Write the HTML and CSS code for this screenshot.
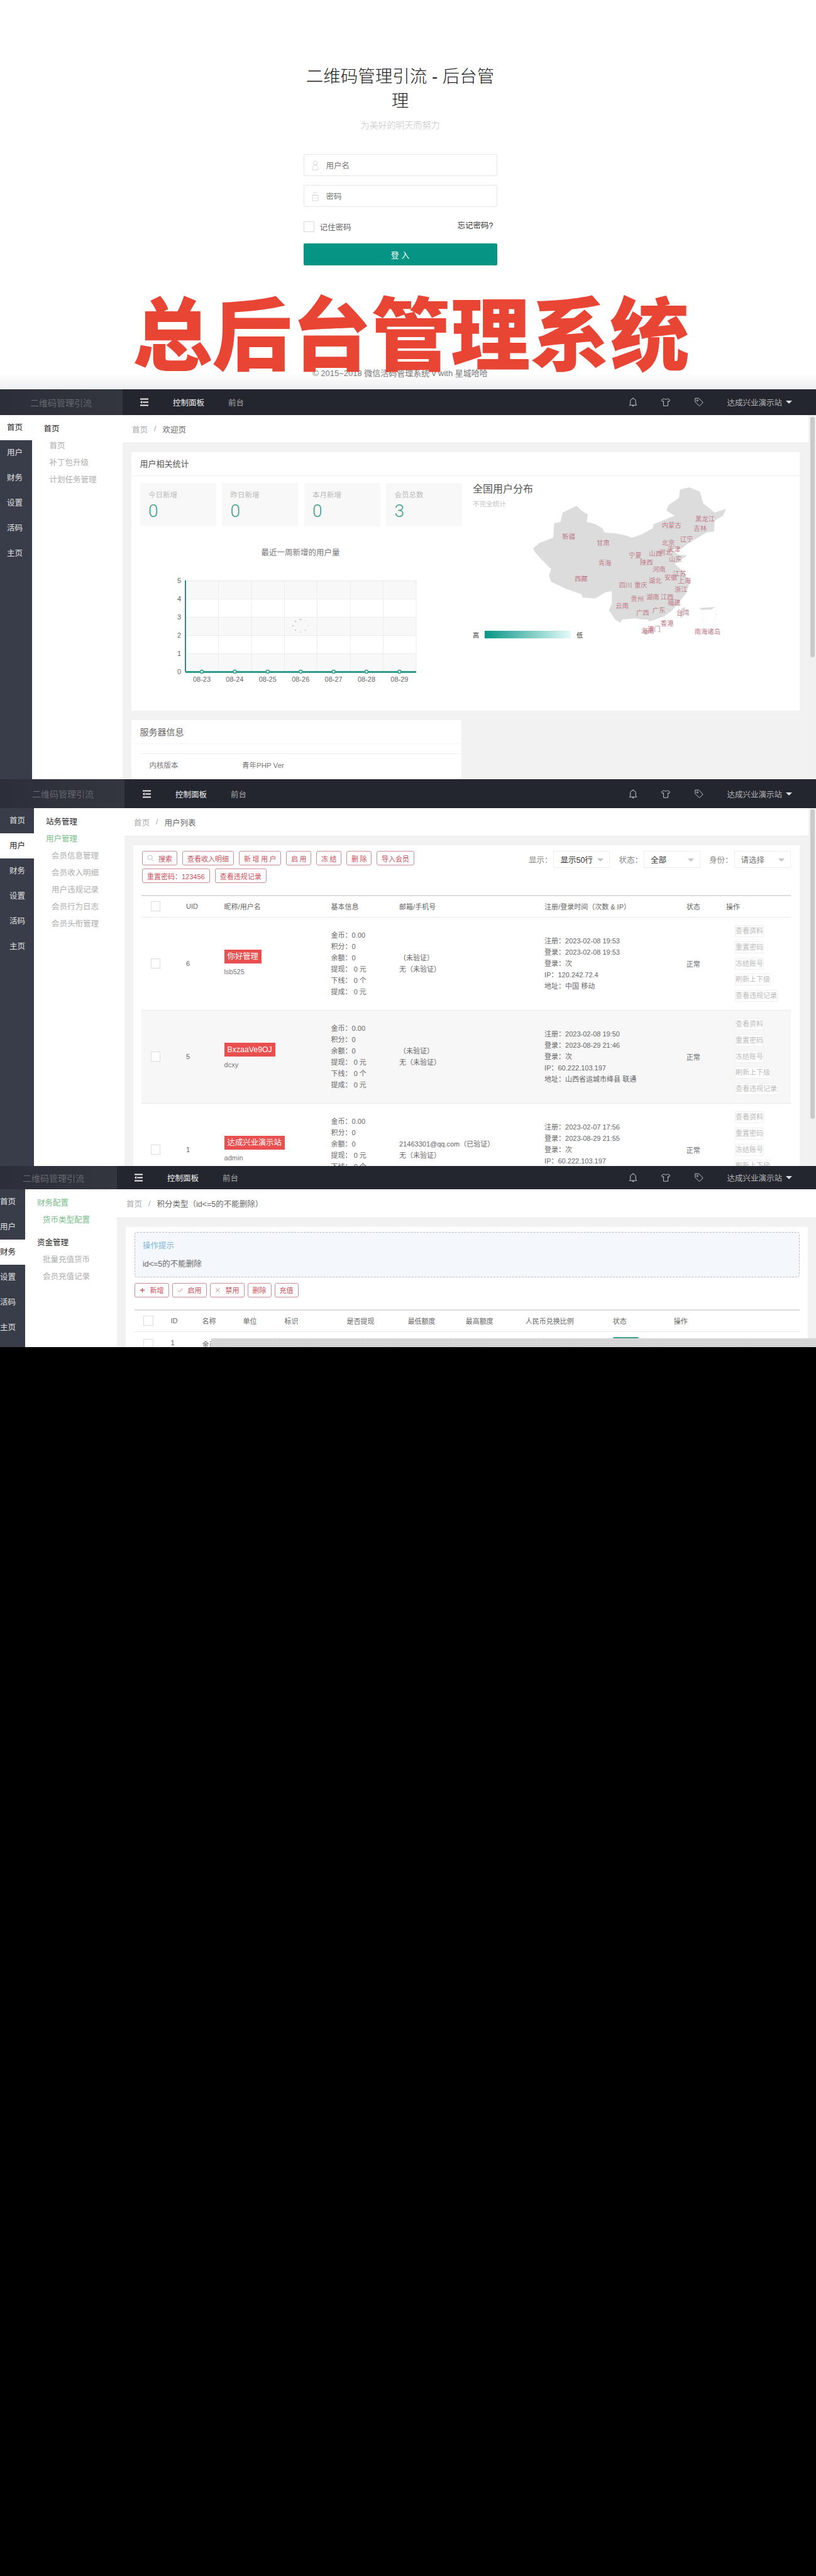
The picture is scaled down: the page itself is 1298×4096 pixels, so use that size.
FILE: index.html
```html
<!DOCTYPE html>
<html lang="zh">
<head>
<meta charset="utf-8">
<title>总后台管理系统</title>
<link rel="stylesheet" href="styles.css">
</head>
<body>
<svg class="defs" width="0" height="0" aria-hidden="true">
  <symbol id="i-menu" viewBox="0 0 15 13"><path d="M1 1.500h13M5 6.500h9M1 11.500h13" fill="none" stroke="currentColor" stroke-width="2"/><path d="M4 4v5L1 6.500z" fill="currentColor"/></symbol>
  <symbol id="i-bell" viewBox="0 0 16 18"><path d="M2 14h12l-1.500-2V7.500A4.500 4.500 0 0 0 8 3a4.500 4.500 0 0 0-4.500 4.500V12zM8 3V1.500M6.300 14.500a1.800 1.800 0 0 0 3.400 0" fill="none" stroke="currentColor" stroke-width="1"/></symbol>
  <symbol id="i-shirt" viewBox="0 0 18 18"><path d="M6 2.500 1.500 5l1.500 3 2-1v8.500h8V7l2 1 1.500-3L12 2.500c-.5 2-5.500 2-6 0z" fill="none" stroke="currentColor" stroke-width="1"/></symbol>
  <symbol id="i-tag" viewBox="0 0 18 18"><path d="M2 2h6.500L16 9.500 9.500 16 2 8.500z" fill="none" stroke="currentColor" stroke-width="1"/><circle cx="6" cy="6" r="1.300" fill="none" stroke="currentColor"/></symbol>
  <symbol id="i-user" viewBox="0 0 14 20"><circle cx="7" cy="5" r="4" fill="none" stroke="currentColor"/><path d="M1.500 19v-5c0-3 2-4.500 5.500-4.500s5.500 1.500 5.500 4.500v5z" fill="none" stroke="currentColor"/></symbol>
  <symbol id="i-lock" viewBox="0 0 14 20"><rect x="1.500" y="8" width="11" height="11" fill="none" stroke="currentColor"/><path d="M3.500 8V5a3.500 3.500 0 0 1 7 0M7 12v3" fill="none" stroke="currentColor"/></symbol>
  <symbol id="i-search" viewBox="0 0 12 12"><circle cx="5" cy="5" r="4" fill="none" stroke="currentColor"/><path d="m8 8 3.500 3.500" stroke="currentColor"/></symbol>
</svg>

<section class="login-panel">
  <div class="login">
    <h1 class="login-title">二维码管理引流 - 后台管理</h1>
    <p class="login-sub">为美好的明天而努力</p>
    <div class="field"><svg class="field-icon"><use href="#i-user"/></svg>用户名</div>
    <div class="field field-next"><svg class="field-icon"><use href="#i-lock"/></svg>密码</div>
    <div class="remember">
      <span class="remember-box"></span><span class="remember-text">记住密码</span>
      <span class="forgot">忘记密码?</span>
    </div>
    <div class="login-btn">登 入</div>
    <p class="login-foot">© 2015~2018 微信活码管理系统 v with 星城哈哈</p>
  </div>
  <div class="banner">总后台管理系统</div>
</section>

<section class="admin p2">
  <header class="topbar">
    <div class="logo">二维码管理引流</div>
    <svg class="menu-icon"><use href="#i-menu"/></svg>
    <span class="topnav topnav-on">控制面板</span><span class="topnav">前台</span>
    <div class="topright">
      <svg class="top-icon"><use href="#i-bell"/></svg><svg class="top-icon"><use href="#i-shirt"/></svg><svg class="top-icon"><use href="#i-tag"/></svg>
      <span class="top-user">达成兴业演示站</span><span class="caret"></span>
    </div>
  </header>
  <div class="body">
    <nav class="rail"><a class="rail-item rail-on">首页</a><a class="rail-item">用户</a><a class="rail-item">财务</a><a class="rail-item">设置</a><a class="rail-item">活码</a><a class="rail-item">主页</a></nav>
    <nav class="subnav">
      <div class="sub-group">首页</div>
      <div class="sub-item">首页</div><div class="sub-item">补丁包升级</div><div class="sub-item">计划任务管理</div>
    </nav>
    <main class="main">
      <div class="crumb"><span class="crumb-home">首页</span><span class="crumb-sep">/</span><span>欢迎页</span></div>
      <div class="content">
        <div class="card card-stats">
          <div class="card-head">用户相关统计</div>
          <div class="dash">
            <div class="dash-left">
              <div class="stats">
                <div class="stat"><div class="stat-label">今日新增</div><div class="stat-value">0</div></div>
                <div class="stat"><div class="stat-label">昨日新增</div><div class="stat-value">0</div></div>
                <div class="stat"><div class="stat-label">本月新增</div><div class="stat-value">0</div></div>
                <div class="stat"><div class="stat-label">会员总数</div><div class="stat-value">3</div></div>
              </div>
              <svg class="chart" viewBox="0 0 460 250" width="460" height="250">
                <text class="chart-title" x="255" y="33" text-anchor="middle">最近一周新增的用户量</text>
                <rect x="72" y="73" width="367" height="29" fill="#f8f8f8"/>
                <rect x="72" y="131" width="367" height="29" fill="#f8f8f8"/>
                <rect x="72" y="189" width="367" height="29" fill="#f8f8f8"/>
                <path class="grid" d="M72 73.500h367M72 102.500h367M72 131.500h367M72 160.500h367M72 189.500h367M124.500 73v145M177 73v145M229.500 73v145M281.500 73v145M334 73v145M386.500 73v145M439 73v145"/>
                <g class="dots"><circle cx="255" cy="135" r="1.500"/><circle cx="247" cy="138" r="1.500"/><circle cx="243" cy="145" r="1.300"/><circle cx="247" cy="152" r="1.200"/><circle cx="255" cy="155" r="1"/><circle cx="263" cy="152" r="1"/><circle cx="267" cy="145" r=".8"/><circle cx="263" cy="138" r=".6"/></g>
                <path d="M72 73v145" stroke="#2f8d7d" stroke-width="2" fill="none"/>
                <path d="M72 218.500h367" stroke="#2f9c8b" stroke-width="3" fill="none"/>
                <g class="points"><circle cx="98" cy="218" r="2.500"/><circle cx="150.400" cy="218" r="2.500"/><circle cx="202.800" cy="218" r="2.500"/><circle cx="255.200" cy="218" r="2.500"/><circle cx="307.600" cy="218" r="2.500"/><circle cx="360" cy="218" r="2.500"/><circle cx="412.400" cy="218" r="2.500"/></g>
                <g class="axis-text" text-anchor="middle">
                  <text x="62" y="77">5</text><text x="62" y="106">4</text><text x="62" y="135">3</text><text x="62" y="164">2</text><text x="62" y="193">1</text><text x="62" y="222">0</text>
                  <text x="98" y="234">08-23</text><text x="150.400" y="234">08-24</text><text x="202.800" y="234">08-25</text><text x="255.200" y="234">08-26</text><text x="307.600" y="234">08-27</text><text x="360" y="234">08-28</text><text x="412.400" y="234">08-29</text>
                </g>
              </svg>
            </div>
            <div class="dash-map">
              <svg class="china" viewBox="0 0 1260 900" width="420" height="300">
                <path class="land" d="M55 395 85 370 150 345 155 275 185 270 195 225 238 205 262 193 285 215 315 235 310 270 350 280 385 300 395 320 450 325 500 335 525 345 570 330 625 300 630 280 680 260 730 240 690 215 700 190 750 155 755 115 800 105 850 125 865 180 920 225 975 208 960 240 920 265 918 315 880 320 840 345 790 375 760 400 730 395 720 405 745 425 790 430 760 450 730 470 775 510 800 560 785 610 760 640 720 690 680 720 610 745 600 735 570 735 540 730 480 735 470 750 445 735 415 690 430 660 430 600 400 605 350 635 290 630 285 615 215 590 140 555 130 525 140 495 90 445 60 410Z"/>
                <path class="land" d="M765 680 780 675 775 710 760 730 750 710Z"/>
                <path class="land" d="M845 680 925 675 905 688 860 690Z"/>
                <ellipse class="land" cx="592" cy="795" rx="15" ry="13"/>
                <path class="islands" d="M930 685 915 760M860 700 875 770"/>
                <g class="map-labels">
                  <text x="193" y="350">新疆</text><text x="357" y="382">甘肃</text><text x="668" y="298">内蒙古</text><text x="828" y="268">黑龙江</text><text x="820" y="313">吉林</text><text x="755" y="363">辽宁</text><text x="668" y="380">北京</text><text x="695" y="412">天津</text><text x="655" y="427">河北</text><text x="607" y="432">山西</text><text x="510" y="440">宁夏</text><text x="564" y="473">陕西</text><text x="702" y="458">山东</text><text x="365" y="477">青海</text><text x="624" y="508">河南</text><text x="722" y="529">江苏</text><text x="680" y="545">安徽</text><text x="745" y="560">上海</text><text x="605" y="561">湖北</text><text x="464" y="582">四川</text><text x="537" y="582">重庆</text><text x="252" y="552">西藏</text><text x="729" y="604">浙江</text><text x="520" y="647">贵州</text><text x="594" y="640">湖南</text><text x="662" y="640">江西</text><text x="696" y="667">福建</text><text x="448" y="682">云南</text><text x="546" y="714">广西</text><text x="623" y="702">广东</text><text x="738" y="714">台湾</text><text x="662" y="766">香港</text><text x="600" y="792">澳门</text><text x="570" y="802">海南</text><text x="824" y="805">南海诸岛</text>
                </g>
              </svg>
              <div class="map-title">全国用户分布</div>
              <div class="map-sub">不完全统计</div>
              <div class="legend"><span>高</span><span class="legend-bar"></span><span>低</span></div>
            </div>
          </div>
        </div>
        <div class="card card-server">
          <div class="card-head">服务器信息</div>
          <div class="server-row"><span class="server-key">内核版本</span><span class="server-val">青年PHP Ver</span></div>
        </div>
      </div>
    </main>
    <div class="scroll"><div class="thumb"></div></div>
  </div>
</section>

<section class="admin p3">
  <header class="topbar">
    <div class="logo">二维码管理引流</div>
    <svg class="menu-icon"><use href="#i-menu"/></svg>
    <span class="topnav topnav-on topnav-mark">控制面板</span><span class="topnav">前台</span>
    <div class="topright">
      <svg class="top-icon"><use href="#i-bell"/></svg><svg class="top-icon"><use href="#i-shirt"/></svg><svg class="top-icon"><use href="#i-tag"/></svg>
      <span class="top-user">达成兴业演示站</span><span class="caret"></span>
    </div>
  </header>
  <div class="body">
    <nav class="rail"><a class="rail-item">首页</a><a class="rail-item rail-on">用户</a><a class="rail-item">财务</a><a class="rail-item">设置</a><a class="rail-item">活码</a><a class="rail-item">主页</a></nav>
    <nav class="subnav">
      <div class="sub-group">站务管理</div>
      <div class="sub-group sub-green">用户管理</div>
      <div class="sub-item">会员信息管理</div><div class="sub-item">会员收入明细</div><div class="sub-item">用户违规记录</div><div class="sub-item">会员行为日志</div><div class="sub-item">会员头衔管理</div>
    </nav>
    <main class="main">
      <div class="crumb"><span class="crumb-home">首页</span><span class="crumb-sep">/</span><span>用户列表</span></div>
      <div class="content">
        <div class="card card-list">
          <div class="toolbar">
            <div class="btns">
              <span class="btn"><svg class="btn-icon"><use href="#i-search"/></svg>搜索</span><span class="btn">查看收入明细</span><span class="btn btn-spaced">新增用户</span><span class="btn btn-spaced">启用</span><span class="btn btn-spaced">冻结</span><span class="btn btn-spaced">删除</span><span class="btn">导入会员</span><span class="btn">重置密码：123456</span><span class="btn">查看违规记录</span>
            </div>
            <div class="filters">
              <span class="filter-label">显示：</span><span class="select">显示50行<i class="select-caret"></i></span>
              <span class="filter-label">状态：</span><span class="select">全部<i class="select-caret"></i></span>
              <span class="filter-label">身份：</span><span class="select select-muted">请选择<i class="select-caret"></i></span>
            </div>
          </div>
          <table class="table users">
            <colgroup><col class="u1"><col class="u2"><col class="u3"><col class="u4"><col class="u5"><col class="u6"><col class="u7"><col class="u8"></colgroup>
            <thead><tr><th><span class="check"></span></th><th>UID</th><th>昵称/用户名</th><th>基本信息</th><th>邮箱/手机号</th><th>注册/登录时间（次数 &amp; IP）</th><th>状态</th><th>操作</th></tr></thead>
            <tbody>
              <tr>
                <td><span class="check"></span></td><td>6</td>
                <td><span class="tag">你好管理</span><div class="uname">lsb525</div></td>
                <td><div class="line">金币：0.00</div><div class="line">积分：0</div><div class="line">余额：0</div><div class="line">提现： 0 元</div><div class="line">下线： 0 个</div><div class="line">提成： 0 元</div></td>
                <td><div class="line">（未验证）</div><div class="line">无（未验证）</div></td>
                <td><div class="line">注册：2023-02-08 19:53</div><div class="line">登录：2023-02-08 19:53</div><div class="line">登录：次</div><div class="line">IP：120.242.72.4</div><div class="line">地址：中国 移动</div></td>
                <td>正常</td>
                <td class="ops"><span class="op">查看资料</span><span class="op">重置密码</span><span class="op">冻结账号</span><span class="op">刷新上下级</span><span class="op">查看违规记录</span></td>
              </tr>
              <tr class="row-alt">
                <td><span class="check"></span></td><td>5</td>
                <td><span class="tag">BxzaaVe9OJ</span><div class="uname">dcxy</div></td>
                <td><div class="line">金币：0.00</div><div class="line">积分：0</div><div class="line">余额：0</div><div class="line">提现： 0 元</div><div class="line">下线： 0 个</div><div class="line">提成： 0 元</div></td>
                <td><div class="line">（未验证）</div><div class="line">无（未验证）</div></td>
                <td><div class="line">注册：2023-02-08 19:50</div><div class="line">登录：2023-08-29 21:46</div><div class="line">登录：次</div><div class="line">IP：60.222.103.197</div><div class="line">地址：山西省运城市绛县 联通</div></td>
                <td>正常</td>
                <td class="ops"><span class="op">查看资料</span><span class="op">重置密码</span><span class="op">冻结账号</span><span class="op">刷新上下级</span><span class="op">查看违规记录</span></td>
              </tr>
              <tr>
                <td><span class="check"></span></td><td>1</td>
                <td><span class="tag">达成兴业演示站</span><div class="uname">admin</div></td>
                <td><div class="line">金币：0.00</div><div class="line">积分：0</div><div class="line">余额：0</div><div class="line">提现： 0 元</div><div class="line">下线： 0 个</div><div class="line">提成： 0 元</div></td>
                <td><div class="line">21463301@qq.com（已验证）</div><div class="line">无（未验证）</div></td>
                <td><div class="line">注册：2023-02-07 17:56</div><div class="line">登录：2023-08-29 21:55</div><div class="line">登录：次</div><div class="line">IP：60.222.103.197</div><div class="line">地址：山西省运城市绛县 联通</div></td>
                <td>正常</td>
                <td class="ops"><span class="op">查看资料</span><span class="op">重置密码</span><span class="op">冻结账号</span><span class="op">刷新上下级</span><span class="op">查看违规记录</span></td>
              </tr>
            </tbody>
          </table>
        </div>
      </div>
    </main>
    <div class="scroll"><div class="thumb"></div></div>
  </div>
</section>

<section class="admin p4">
  <header class="topbar">
    <div class="logo">二维码管理引流</div>
    <svg class="menu-icon"><use href="#i-menu"/></svg>
    <span class="topnav topnav-on">控制面板</span><span class="topnav">前台</span>
    <div class="topright">
      <svg class="top-icon"><use href="#i-bell"/></svg><svg class="top-icon"><use href="#i-shirt"/></svg><svg class="top-icon"><use href="#i-tag"/></svg>
      <span class="top-user">达成兴业演示站</span><span class="caret"></span>
    </div>
  </header>
  <div class="body">
    <nav class="rail"><a class="rail-item">首页</a><a class="rail-item">用户</a><a class="rail-item rail-on">财务</a><a class="rail-item">设置</a><a class="rail-item">活码</a><a class="rail-item">主页</a></nav>
    <nav class="subnav">
      <div class="sub-group sub-green">财务配置</div>
      <div class="sub-item sub-item-green">货币类型配置</div>
      <div class="sub-group sub-gap">资金管理</div>
      <div class="sub-item">批量充值货币</div><div class="sub-item">会员充值记录</div>
    </nav>
    <main class="main">
      <div class="crumb"><span class="crumb-home">首页</span><span class="crumb-sep">/</span><span>积分类型（id&lt;=5的不能删除）</span></div>
      <div class="content">
        <div class="card card-coin">
          <div class="tips"><div class="tips-title">操作提示</div><div class="tips-text">id&lt;=5的不能删除</div></div>
          <div class="btns btns-coin">
            <span class="btn"><svg class="btn-icon" viewBox="0 0 10 10"><path d="M5 1v8M1 5h8" stroke="currentColor" stroke-width="1.500"/></svg>新增</span>
            <span class="btn"><svg class="btn-icon" viewBox="0 0 10 10"><path d="m1 5 3 3 5-6" fill="none" stroke="currentColor" stroke-width=".8"/></svg>启用</span>
            <span class="btn"><svg class="btn-icon" viewBox="0 0 10 10"><path d="m1.500 1.500 7 7M8.500 1.500l-7 7" fill="none" stroke="currentColor" stroke-width=".8"/></svg>禁用</span>
            <span class="btn">删除</span><span class="btn">充值</span>
          </div>
          <table class="table coins">
            <colgroup><col class="c1"><col class="c2"><col class="c3"><col class="c4"><col class="c5"><col class="c6"><col class="c7"><col class="c8"><col class="c9"><col class="c10"><col class="c11"></colgroup>
            <thead><tr><th><span class="check"></span></th><th>ID</th><th>名称</th><th>单位</th><th>标识</th><th>是否提现</th><th>最低额度</th><th>最高额度</th><th>人民币兑换比例</th><th>状态</th><th>操作</th></tr></thead>
            <tbody><tr><td><span class="check"></span></td><td>1</td><td>金币</td><td></td><td></td><td></td><td></td><td></td><td></td><td><span class="switch"></span></td><td></td></tr></tbody>
          </table>
        </div>
      </div>
    </main>
  </div>
  <div class="dither"></div>
</section>
</body>
</html>
```

FILE: styles.css
```css
* { box-sizing: border-box; }
html, body { margin: 0; padding: 0; }
body {
  background: #000;
  font-family: "Liberation Sans", "Noto Sans CJK SC", sans-serif;
  color: #666;
  font-size: 11px;
  height: 4096px;
  overflow: hidden;
}
.defs { position: absolute; }
p, h1 { margin: 0; font-weight: 400; }

/* login */
.login-panel {
  position: relative;
  height: 619px;
  overflow: hidden;
  background: linear-gradient(#fff 592px, #eeeff1 619px);
}
.login { width: 308px; margin-left: 482.500px; padding-top: 102px; text-align: center; }
.login-title { font-size: 27.500px; line-height: 39px; font-weight: 300; color: #222; }
.login-sub { margin-top: 9px; font-size: 14px; line-height: 20px; color: #c4c4c4; font-weight: 300; }
.field {
  display: flex; align-items: center;
  height: 35px; margin-top: 36px; padding-left: 12px;
  border: 1px solid #e6e6e6; border-radius: 2px; background: #fff;
  font-size: 12.500px; color: #777; text-align: left;
}
.field-next { margin-top: 14px; }
.field-icon { width: 11px; height: 16px; margin-right: 12px; color: #ccc; }
.remember { display: flex; align-items: center; height: 16px; margin-top: 23px; font-size: 12.500px; color: #666; }
.remember-box { width: 17px; height: 17px; border: 1px solid #d8d8d8; background: #fff; }
.remember-text { margin-left: 9px; }
.forgot { margin-left: auto; margin-right: 6px; margin-top: -6px; color: #333; }
.login-btn {
  display: flex; align-items: center; justify-content: center;
  height: 35px; margin-top: 19px; border-radius: 2px;
  background: #069584; color: #fff; font-size: 13px;
}
.login-foot { margin-top: 162px; font-size: 13px; line-height: 20px; color: #777; white-space: nowrap; }
.banner {
  position: absolute; left: 211px; top: 463px;
  font-family: "Noto Sans CJK SC", sans-serif;
  font-size: 126.500px; line-height: 122px; font-weight: 900;
  color: #e84535; white-space: nowrap;
}

/* admin shell */
.admin { position: relative; display: flex; flex-direction: column; overflow: hidden; background: #fff; }
.p2 { height: 620px; --bar: 41px; --rail: 50.600px; --side: 195px; --rail-pad: 11px; --logo-pad: 48px; --menu: 27px; }
.p3 { height: 615px; --bar: 46px; --rail: 54px; --side: 198px; --rail-pad: 15px; --logo-pad: 51px; --menu: 28px; }
.p4 { height: 288px; --bar: 37px; --rail: 40px; --side: 186px; --rail-pad: 0px; --logo-pad: 36px; --menu: 27px; }

.topbar { flex: none; display: flex; align-items: center; height: var(--bar); background: #23262f; color: #ccc; }
.logo {
  align-self: stretch; display: flex; align-items: center;
  width: var(--side); padding-left: var(--logo-pad);
  background: linear-gradient(90deg, #2c2f39, #33363f);
  color: #7b7d84; font-size: 14px; font-weight: 300;
}
.menu-icon { width: 15px; height: 13px; margin-left: var(--menu); color: #eee; }
.topnav { position: relative; margin-left: 38px; font-size: 12.500px; color: #aaa; }
.topnav-on { color: #f2f2f2; }
.topnav-mark::before { content: ""; position: absolute; left: 0; right: 0; top: -16px; height: 2px; background: #777; }
.topright { display: flex; align-items: center; margin-left: auto; padding-right: 38px; }
.top-icon { width: 16px; height: 17px; margin-right: 36.500px; color: #d5d5d5; }
.top-user { font-size: 12.500px; color: #b5b5b5; margin-right: 6px; }
.caret { width: 0; height: 0; border-left: 5px solid transparent; border-right: 5px solid transparent; border-top: 5px solid #ddd; }

.body { flex: 1; min-height: 0; display: flex; }
.rail { flex: none; width: var(--rail); background: #393d49; }
.rail-item { display: block; height: 40px; padding-left: var(--rail-pad); line-height: 40px; font-size: 12.500px; color: #e2e2e2; white-space: nowrap; overflow: hidden; }
.rail-on { background: #fff; color: #222; }
.subnav { flex: none; width: calc(var(--side) - var(--rail)); padding: 9px 0 0 19px; background: #fff; font-size: 12.500px; line-height: 27px; }
.sub-group { color: #222; }
.sub-green { color: #76bd89; }
.sub-gap { margin-top: 9px; }
.sub-item { padding-left: 9px; color: #aeaeae; white-space: nowrap; }
.sub-item-green { color: #76bd89; }
.main { flex: 1; min-width: 0; display: flex; flex-direction: column; background: #f2f2f2; }
.crumb { flex: none; display: flex; align-items: center; height: 45px; padding-left: 15px; background: #fff; border-bottom: 1px solid #e9e9e9; font-size: 12.500px; color: #666; }
.crumb-home { color: #aaa; }
.crumb-sep { margin: 0 10px; color: #aaa; }
.content { flex: 1; min-height: 0; padding: 14px 14px 0; }
.p4 .crumb { height: 46px; }
.p4 .content { padding-right: 13px; }
.scroll { flex: none; width: 12px; padding: 3px 2px 0 3px; background: #f1f1f1; }
.thumb { height: 382px; border-radius: 3px; background: #c9c9c9; }
.p3 .scroll { padding-top: 2px; }
.p3 .thumb { height: 492px; }

.card { background: #fff; }
.card-head { height: 38px; padding-left: 13.500px; line-height: 38px; border-bottom: 1px solid #f0f0f0; font-size: 13px; color: #555; }

/* dashboard */
.card-stats { height: 411px; margin-bottom: 15px; }
.dash { display: flex; padding-left: 14px; }
.dash-left { flex: none; width: 512.500px; padding-top: 11px; }
.stats { display: grid; grid-template-columns: repeat(4, 1fr); gap: 9.500px; }
.stat { height: 68.500px; padding: 11px 13px; background: #f8f8f8; }
.stat-label { font-size: 11.500px; line-height: 16px; color: #bbb; }
.stat-value { margin-top: 2px; font-family: Roboto, sans-serif; font-weight: 300; font-size: 28px; line-height: 32px; color: #3f9f8c; }
.chart { display: block; margin-top: 13.500px; }
.chart-title { font-size: 12.500px; fill: #777; }
.grid { fill: none; stroke: #ececec; stroke-width: 1; }
.dots { fill: #ccc; }
.points circle { fill: #e8f7f3; stroke: #2f9c8b; stroke-width: 1.500; }
.axis-text { font-size: 11px; fill: #666; }
.dash-map { position: relative; flex: 1; margin-left: 16.500px; padding-top: 10px; }
.china { position: absolute; left: 78px; top: -17px; }
.land { fill: #dcdcdc; }
.islands { fill: none; stroke: #e2e2e2; stroke-dasharray: 6 6; stroke-width: 2; }
.map-labels { font-size: 31px; fill: #c07c8a; }
.map-title { position: relative; font-size: 16px; line-height: 22px; color: #555; }
.map-sub { position: relative; margin-top: 3.500px; font-size: 10.600px; line-height: 16px; color: #c4c4c4; }
.legend { position: relative; display: flex; align-items: center; height: 12px; margin-top: 194.500px; font-size: 10px; color: #333; }
.legend-bar { width: 136.500px; height: 12px; margin: 0 9px 0 9.500px; background: linear-gradient(90deg, #069584, #e4fbfa); }
.card-server { width: 525px; height: 110px; }
.card-server .card-head { font-size: 14px; color: #666; border-bottom-color: #f7f7f7; }
.server-row { display: flex; align-items: center; height: 34px; margin: 15px 0 0 14px; border-top: 1px solid #f0f0f0; font-size: 11.500px; color: #777; }
.server-key { width: 162px; padding-left: 14.500px; }

/* lists */
.card-list { height: 600px; padding: 9px 14.500px 0 13px; }
.toolbar { display: flex; align-items: flex-start; justify-content: space-between; height: 70px; padding-left: 1px; }
.btns { display: flex; flex-wrap: wrap; gap: 4.700px 8px; width: 445px; }
.btn {
  display: inline-flex; align-items: center;
  height: 23.300px; padding: 0 7px;
  border: 1px solid #cb8f96; border-radius: 3px;
  font-size: 11px; color: #c9525d; white-space: nowrap;
}
.btn-spaced { padding: 0 4px 0 7px; letter-spacing: 2.500px; }
.btn-icon { width: 11px; height: 11px; margin-right: 7px; color: #bbb; }
.filters { display: flex; align-items: center; }
.filter-label { margin: 0 2px 0 14px; font-size: 12.500px; color: #888; white-space: nowrap; }
.select { position: relative; display: flex; align-items: center; width: 90px; height: 27px; padding-left: 10px; border: 1px solid #eee; font-size: 12.500px; color: #333; white-space: nowrap; }
.select-muted { color: #777; }
.select-caret { position: absolute; right: 9px; top: 11px; width: 0; height: 0; border-left: 5px solid transparent; border-right: 5px solid transparent; border-top: 5px solid #c4c4c4; }
.table { width: 100%; table-layout: fixed; border-collapse: collapse; border-top: 2px solid #ddd; font-size: 11px; color: #666; }
.table th { height: 34px; padding: 0 0 0 15px; text-align: left; font-weight: 400; border-bottom: 1px solid #e9e9e9; white-space: nowrap; color: #666; }
.table td { padding: 0 0 0 15px; border-bottom: 1px solid #e9e9e9; white-space: nowrap; vertical-align: middle; }
.users td { height: 148px; }
.row-alt td { background: #f7f7f7; }
.u1 { width: 56px; } .u2 { width: 60.600px; } .u3 { width: 170px; } .u4 { width: 108.500px; } .u5 { width: 231px; } .u6 { width: 225.700px; } .u7 { width: 63.300px; } .u8 { width: 117.500px; }
.check { display: block; width: 15px; height: 16px; border: 1px solid #ddd; background: #fff; }
.tag { display: inline-block; height: 22px; padding: 0 5px; line-height: 22px; background: #ea4f50; color: #fff; font-size: 12.300px; }
.uname { margin-top: 5px; line-height: 17px; color: #777; }
.line { line-height: 18px; }
.table td.ops { padding-left: 29px; }
.op { display: table; height: 17.500px; margin: 0 0 6.900px; padding: 0 4px; line-height: 17px; border: 1px solid #f0f0f0; background: #fff; color: #bbb; font-size: 11px; }
.op:last-child { margin-bottom: 0; }

/* coin */
.card-coin { height: 300px; padding: 8px 13px 0 13.500px; }
.tips { height: 72px; padding: 12px 12.500px 0; border: 1px dashed #b8bec6; border-radius: 4px; background: #f4f8fd; }
.tips-title { font-size: 12.500px; line-height: 18px; color: #82b5d6; }
.tips-text { margin-top: 11px; font-size: 12.500px; line-height: 18px; color: #666; }
.btns-coin { width: auto; gap: 5px; margin-top: 9px; }
.btns-coin .btn { height: 22.700px; }
.btns-coin .btn-icon { width: 9px; height: 9px; margin-right: 8px; color: #c9525d; }
.coins { margin-top: 19.500px; }
.coins th { height: 34px; padding-left: 14px; }
.coins td { height: 40px; padding-left: 14px; border: 0; vertical-align: top; padding-top: 11px; }
.coins .check { width: 16px; }
.c1 { width: 44px; } .c2 { width: 50px; } .c3 { width: 65px; } .c4 { width: 66px; } .c5 { width: 99px; } .c6 { width: 97px; } .c7 { width: 92px; } .c8 { width: 95px; } .c9 { width: 139px; } .c10 { width: 97px; } .c11 { width: 214px; }
.switch { display: block; width: 41px; height: 16px; margin-top: -3px; background: #3f9f8c; border-radius: 2px; }
.dither {
  position: absolute; left: 336px; right: 0; bottom: 0; height: 14px;
  background-color: #d4d4d4;
  background-image: radial-gradient(#e4e4e4 .6px, transparent .8px);
  background-size: 4px 4px;
}
```
